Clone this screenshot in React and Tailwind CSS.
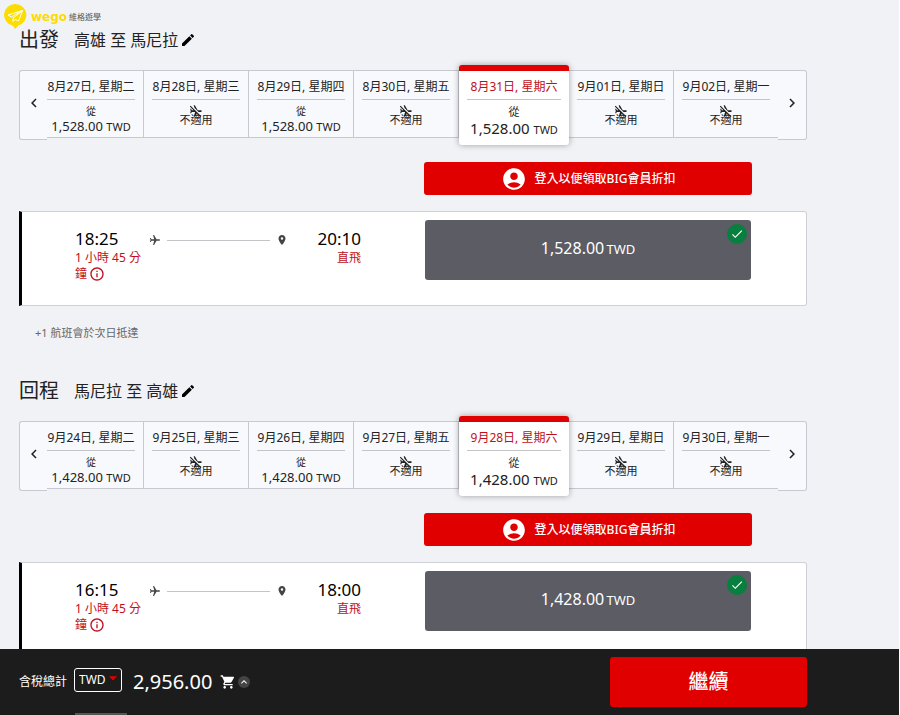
import {
  MdAccountCircle,
  MdAirplanemodeActive,
  MdAirplanemodeInactive,
  MdArrowDropDown,
  MdCheck,
  MdChevronLeft,
  MdChevronRight,
  MdEdit,
  MdInfoOutline,
  MdKeyboardArrowUp,
  MdLocationOn,
  MdShoppingCart,
} from "react-icons/md";

const trips = [
  {
    title: "出發",
    from: "高雄",
    to: "馬尼拉",
    price: "1,528.00",
    depart: "18:25",
    arrive: "20:10",
    note: "+1 航班會於次日抵達",
    days: [
      { date: "8月27日, 星期二", price: "1,528.00" },
      { date: "8月28日, 星期三" },
      { date: "8月29日, 星期四", price: "1,528.00" },
      { date: "8月30日, 星期五" },
      { date: "8月31日, 星期六", price: "1,528.00", selected: true },
      { date: "9月01日, 星期日" },
      { date: "9月02日, 星期一" },
    ],
  },
  {
    title: "回程",
    from: "馬尼拉",
    to: "高雄",
    price: "1,428.00",
    depart: "16:15",
    arrive: "18:00",
    days: [
      { date: "9月24日, 星期二", price: "1,428.00" },
      { date: "9月25日, 星期三" },
      { date: "9月26日, 星期四", price: "1,428.00" },
      { date: "9月27日, 星期五" },
      { date: "9月28日, 星期六", price: "1,428.00", selected: true },
      { date: "9月29日, 星期日" },
      { date: "9月30日, 星期一" },
    ],
  },
];

function Logo() {
  return (
    <div className="absolute top-1 left-1 flex items-center">
      <svg viewBox="0 0 23 25" className="h-[25px] w-[23px]">
        <path d="M11.3 0a11 11 0 0 1 3 21.6L11 25l-2-3.2A11 11 0 0 1 11.3 0z" fill="#fddc00" />
        <path
          d="M18.5 6.5 4 11l3.3 2L18.5 6.5 9 14.3v3.2l2-2.2 3.5 1.7z"
          fill="none"
          stroke="#fff"
          strokeLinejoin="round"
        />
      </svg>
      <span className="ml-1 font-['DejaVu_Sans'] text-[12px] leading-none font-bold text-[#fddc00]">
        wego
      </span>
      <span className="ml-0.5 text-[8px] leading-none text-[#555]">維格遊學</span>
    </div>
  );
}

function DayCell({ day }) {
  if (day.selected) {
    return (
      <button
        type="button"
        aria-pressed="true"
        className="relative z-10 -mt-[5px] -mb-[5px] flex h-20 w-[110px] shrink-0 flex-col rounded-[3px] border-t-6 border-[#e00000] bg-white px-2 pt-2 shadow-[0_0_6px_rgba(0,0,0,0.35)]"
      >
        <span className="w-full border-b border-[#c4c4c8] pb-1 text-center text-[12px] leading-4 whitespace-nowrap text-[#c01020]">
          {day.date}
        </span>
        <span className="w-full pt-1 text-center text-[11px] leading-4">從</span>
        <span className="w-full text-center text-[15px] leading-4 whitespace-nowrap">
          {day.price} <span className="text-[11px]">TWD</span>
        </span>
      </button>
    );
  }

  return (
    <button
      type="button"
      className="flex h-[68px] min-w-0 flex-1 flex-col border-y border-r border-[#c8c9d0] bg-[#f8f9fc] px-2 pt-2"
    >
      <span className="w-full border-b border-[#c4c4c8] pb-1 text-center text-[12px] leading-4 whitespace-nowrap">
        {day.date}
      </span>
      {day.price ? (
        <>
          <span className="w-full pt-1 text-center text-[10px] leading-[14px]">從</span>
          <span className="w-full text-center text-[13px] leading-4 whitespace-nowrap">
            {day.price} <span className="text-[11px]">TWD</span>
          </span>
        </>
      ) : (
        <span className="flex w-full flex-col items-center pt-1 text-[11px] leading-4">
          <MdAirplanemodeInactive className="h-3.5 w-3.5 -scale-x-100 rotate-90" />
          <span className="-mt-1.5">不適用</span>
        </span>
      )}
    </button>
  );
}

function DateStrip({ days }) {
  return (
    <div className="flex items-start">
      <button
        type="button"
        aria-label="前一週"
        className="relative z-10 -mr-2 flex h-[70px] w-7 items-center justify-center rounded-l-[3px] border-y border-l border-[#c8c9d0] bg-[#f8f9fc] pb-1"
      >
        <MdChevronLeft className="h-[18px] w-[18px]" />
      </button>
      {days.map((day) => (
        <DayCell key={day.date} day={day} />
      ))}
      <button
        type="button"
        aria-label="後一週"
        className="relative -ml-px flex h-[70px] w-[29px] items-center justify-center rounded-r-[3px] border-y border-r border-[#c8c9d0] bg-[#f8f9fc] pb-1"
      >
        <MdChevronRight className="h-[18px] w-[18px]" />
      </button>
    </div>
  );
}

function FlightCard({ trip }) {
  return (
    <div className="mt-4 flex h-[95px] rounded-r-[3px] border border-l-3 border-[#cfd0d5] border-l-black bg-white pr-[55px]">
      <div className="flex flex-1 items-start pt-4 pl-[53px]">
        <div className="w-[70px]">
          <div className="text-[17px] leading-[22px] text-black">{trip.depart}</div>
          <div className="text-[12px] leading-4 text-[#c01020]">
            1 小時 45 分鐘
            <MdInfoOutline className="ml-0.5 inline h-4 w-4 align-[-4px]" />
          </div>
        </div>
        <div className="flex h-6 flex-1 items-center gap-1.5 pl-1">
          <MdAirplanemodeActive className="h-3 w-3 rotate-90 text-[#444]" />
          <div className="h-px flex-1 bg-[#c4c4c8]" />
          <MdLocationOn className="h-3 w-3 text-[#444]" />
        </div>
        <div className="w-[73px] text-right">
          <div className="text-[17px] leading-[22px] text-black">{trip.arrive}</div>
          <div className="text-[12px] leading-4 text-[#c01020]">直飛</div>
        </div>
      </div>
      <button
        type="button"
        className="relative mt-2 ml-16 h-[60px] w-[326px] rounded-[3px] bg-[#5b5c64] pb-1 text-[16px] text-white"
      >
        {trip.price} <span className="-ml-0.5 text-[13px]">TWD</span>
        <span className="absolute top-1 right-1 flex h-5 w-5 items-center justify-center rounded-full bg-[#087f3e]">
          <MdCheck className="h-3.5 w-3.5" />
        </span>
      </button>
    </div>
  );
}

function Trip({ trip }) {
  return (
    <section>
      <div className="flex h-7 items-center">
        <h2 className="w-[55px] text-[20px] leading-7">{trip.title}</h2>
        <span className="text-[16px] leading-7">
          {trip.from} 至 {trip.to}
        </span>
        <button type="button" aria-label="編輯" className="ml-0.5">
          <MdEdit className="h-4 w-4 text-black" />
        </button>
      </div>
      <div className="mt-4">
        <DateStrip days={trip.days} />
      </div>
      <div className="mt-[22px] flex justify-end pr-[55px]">
        <button
          type="button"
          className="flex h-[33px] w-[328px] items-center justify-center gap-2 rounded-[3px] bg-[#e00000] text-[12px] font-medium text-white"
        >
          <MdAccountCircle className="h-[26px] w-[26px]" />
          登入以便領取BIG會員折扣
        </button>
      </div>
      <FlightCard trip={trip} />
      {trip.note && (
        <p className="mt-4 mb-[33px] pl-4 text-[11px] leading-[22px] text-[#666]">{trip.note}</p>
      )}
    </section>
  );
}

function Footer() {
  return (
    <footer className="relative flex h-[66px] shrink-0 items-center bg-[#1c1c1c] pr-[92px] pl-[19px] text-white">
      <label htmlFor="currency" className="w-[55px] text-[12px] whitespace-nowrap">
        含稅總計
      </label>
      <div className="relative mb-1.5">
        <select
          id="currency"
          className="h-6 w-12 appearance-none rounded-[3px] border border-white bg-[#1c1c1c] pl-1 text-[12px]"
        >
          <option>TWD</option>
        </select>
        <MdArrowDropDown className="pointer-events-none absolute top-0.5 -right-px h-5 w-5 text-[#e00000]" />
      </div>
      <span className="ml-[11px] text-[20px]">2,956.00</span>
      <MdShoppingCart className="ml-2 h-4 w-4" />
      <button
        type="button"
        aria-label="顯示明細"
        className="ml-0.5 flex h-3 w-3 items-center justify-center rounded-full bg-[#444]"
      >
        <MdKeyboardArrowUp className="h-3 w-3" />
      </button>
      <button
        type="button"
        className="ml-auto h-[50px] w-[197px] rounded-[3px] bg-[#e00000] text-[20px] font-medium"
      >
        繼續
      </button>
      <div className="absolute bottom-0 left-[75px] h-0.5 w-[52px] bg-[#555]" />
    </footer>
  );
}

export default function App() {
  return (
    <div className="relative flex h-screen flex-col overflow-hidden border-r border-white bg-[#f1f2f6] font-['Noto_Sans','Noto_Sans_CJK_TC',sans-serif] text-[#222]">
      <Logo />
      <main className="min-h-0 flex-1 overflow-hidden pt-[26px] pr-[92px] pl-[19px]">
        {trips.map((trip) => (
          <Trip key={trip.title} trip={trip} />
        ))}
      </main>
      <Footer />
    </div>
  );
}
